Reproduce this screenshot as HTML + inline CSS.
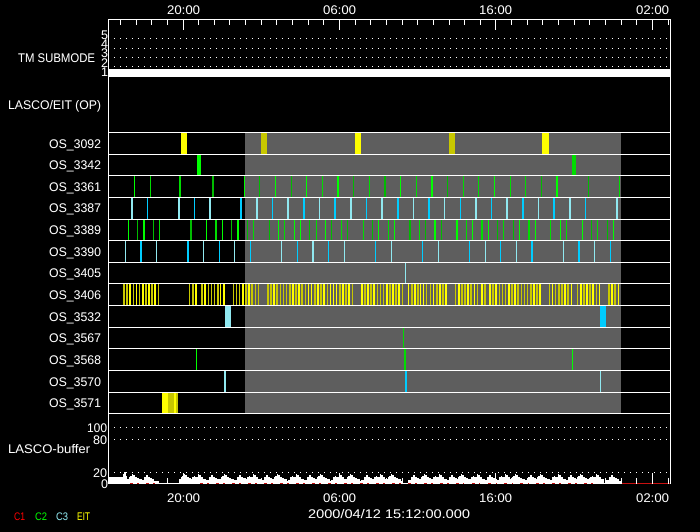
<!DOCTYPE html>
<html><head><meta charset="utf-8"><style>
html,body{margin:0;padding:0;background:#000;width:700px;height:532px;overflow:hidden}
svg{display:block;font-family:"Liberation Sans",sans-serif;font-size:12.5px;fill:#fff}
.a rect,.c rect{width:1px}
.a rect{height:22px}.c rect{height:21px}
rect.t{width:2px}rect.w{width:3px}rect.f{width:6px}rect.v{width:4px}
.g{fill:#0f0}.m{fill:#0d0}.o{fill:#0b0}
.l{fill:#90e8f0}.n{fill:#0cf}
.y{fill:#ff0}.d{fill:#c8c800}
</style></head><body>
<svg width="700" height="532" viewBox="0 0 700 532" shape-rendering="crispEdges">
<rect width="700" height="532" fill="#000"/>
<rect x="245" y="132" width="376" height="281" fill="#5e5e5e"/>

<g class="a" transform="translate(0,132)"><rect class="f y" x="181"/><rect class="f d" x="261"/><rect class="f y" x="355"/><rect class="f d" x="449"/><rect class="f y" x="542" style="width:7px"/></g>

<g class="c" transform="translate(0,154)"><rect class="v g" x="197"/><rect class="v m" x="572"/></g>

<g class="a" transform="translate(0,175)"><rect class="g" x="134"/><rect class="m" x="150"/><rect class="t m" x="179"/><rect class="t o" x="212"/><rect class="g" x="244"/><rect class="o" x="259"/><rect class="g" x="275"/><rect class="o" x="291"/><rect class="g" x="306"/><rect class="m" x="322"/><rect class="t g" x="337"/><rect class="o" x="353"/><rect class="m" x="369"/><rect class="t o" x="384"/><rect class="g" x="400"/><rect class="m" x="416"/><rect class="t g" x="431"/><rect class="o" x="447"/><rect class="m" x="463"/><rect class="m" x="478"/><rect class="g" x="494"/><rect class="m" x="510"/><rect class="m" x="525"/><rect class="o" x="541"/><rect class="t g" x="556"/><rect class="o" x="588"/><rect class="m" x="619"/></g>

<g class="a" transform="translate(0,197)"><rect class="t l" x="131"/><rect class="n" x="147"/><rect class="t l" x="178"/><rect class="n" x="194"/><rect class="t l" x="209"/><rect class="t n" x="240"/><rect class="t l" x="256"/><rect class="n" x="272"/><rect class="t l" x="287"/><rect class="t n" x="303"/><rect class="l" x="319"/><rect class="t n" x="334"/><rect class="t l" x="350"/><rect class="n" x="366"/><rect class="t l" x="381"/><rect class="t n" x="397"/><rect class="l" x="413"/><rect class="t n" x="428"/><rect class="l" x="444"/><rect class="n" x="460"/><rect class="t l" x="475"/><rect class="n" x="491"/><rect class="t l" x="506"/><rect class="t n" x="522"/><rect class="l" x="538"/><rect class="t n" x="553"/><rect class="t l" x="569"/><rect class="n" x="585"/><rect class="t l" x="616"/></g>

<g class="c" transform="translate(0,219)"><rect class="g" x="128"/><rect class="o" x="137"/><rect class="t g" x="143"/><rect class="o" x="153"/><rect class="m" x="159"/><rect class="t o" x="190"/><rect class="g" x="206"/><rect class="t m" x="215"/><rect class="g" x="222"/><rect class="o" x="231"/><rect class="t g" x="237"/><rect class="o" x="247"/><rect class="m" x="253"/><rect class="o" x="269"/><rect class="g" x="278"/><rect class="m" x="284"/><rect class="g" x="294"/><rect class="g" x="300"/><rect class="o" x="309"/><rect class="m" x="316"/><rect class="g" x="325"/><rect class="o" x="331"/><rect class="m" x="341"/><rect class="o" x="347"/><rect class="m" x="363"/><rect class="o" x="372"/><rect class="g" x="378"/><rect class="m" x="388"/><rect class="g" x="394"/><rect class="t o" x="409"/><rect class="m" x="419"/><rect class="o" x="425"/><rect class="t g" x="434"/><rect class="o" x="441"/><rect class="t g" x="456"/><rect class="m" x="466"/><rect class="g" x="472"/><rect class="t m" x="481"/><rect class="g" x="488"/><rect class="o" x="497"/><rect class="m" x="503"/><rect class="o" x="513"/><rect class="g" x="519"/><rect class="t m" x="528"/><rect class="g" x="535"/><rect class="m" x="550"/><rect class="g" x="560"/><rect class="m" x="566"/><rect class="g" x="582"/><rect class="o" x="591"/><rect class="m" x="597"/><rect class="o" x="607"/><rect class="g" x="613"/></g>

<g class="a" transform="translate(0,240)"><rect class="l" x="125"/><rect class="t n" x="140"/><rect class="l" x="156"/><rect class="t n" x="187"/><rect class="l" x="203"/><rect class="n" x="219"/><rect class="l" x="234"/><rect class="n" x="250"/><rect class="l" x="281"/><rect class="n" x="297"/><rect class="t l" x="312"/><rect class="n" x="328"/><rect class="l" x="344"/><rect class="n" x="375"/><rect class="l" x="391"/><rect class="n" x="422"/><rect class="l" x="438"/><rect class="n" x="469"/><rect class="l" x="485"/><rect class="n" x="500"/><rect class="l" x="516"/><rect class="t n" x="531"/><rect class="l" x="563"/><rect class="t n" x="578"/><rect class="l" x="594"/><rect class="n" x="610"/></g>

<g class="c" transform="translate(0,262)"><rect class="l" x="405"/></g>

<g class="a" transform="translate(0,283)"><rect class="t d" x="123"/><rect class="t d" x="126"/><rect class="t y" x="129"/><rect class="d" x="133"/><rect class="y" x="136"/><rect class="d" x="139"/><rect class="t y" x="142"/><rect class="t d" x="145"/><rect class="t y" x="148"/><rect class="t d" x="151"/><rect class="t y" x="154"/><rect class="d" x="158"/>
<rect class="d" x="189"/><rect class="t d" x="192"/><rect class="t y" x="195"/><rect class="t d" x="201"/><rect class="t y" x="204"/><rect class="d" x="208"/><rect class="d" x="211"/><rect class="d" x="214"/><rect class="t d" x="217"/><rect class="y" x="220"/><rect class="t y" x="223"/>
<rect class="d" x="233"/><rect class="d" x="236"/><rect class="d" x="239"/><rect class="t y" x="242"/><rect class="t d" x="245"/><rect class="t y" x="248"/><rect class="t d" x="251"/><rect class="d" x="255"/><rect class="d" x="258"/>
<rect class="t d" x="267"/><rect class="t d" x="270"/><rect class="t y" x="273"/><rect class="t d" x="276"/><rect class="d" x="280"/><rect class="d" x="283"/><rect class="d" x="286"/><rect class="t d" x="289"/><rect class="t y" x="292"/><rect class="t d" x="295"/><rect class="t y" x="298"/>
<rect class="t d" x="301"/><rect class="d" x="305"/><rect class="y" x="308"/><rect class="y" x="311"/><rect class="t d" x="314"/><rect class="t y" x="317"/><rect class="t d" x="320"/><rect class="t y" x="323"/><rect class="d" x="327"/><rect class="y" x="330"/><rect class="y" x="333"/><rect class="y" x="336"/><rect class="t d" x="339"/><rect class="t y" x="342"/><rect class="t d" x="345"/><rect class="t y" x="348"/><rect class="d" x="352"/>
<rect class="t y" x="361"/><rect class="t d" x="364"/><rect class="t y" x="367"/><rect class="t d" x="370"/><rect class="t y" x="373"/><rect class="d" x="377"/><rect class="d" x="380"/><rect class="d" x="383"/><rect class="t y" x="386"/><rect class="t d" x="389"/><rect class="t y" x="392"/><rect class="t d" x="395"/><rect class="t y" x="398"/><rect class="d" x="402"/>
<rect class="y" x="408"/><rect class="t d" x="411"/><rect class="t y" x="414"/><rect class="t d" x="417"/><rect class="y" x="420"/><rect class="y" x="423"/><rect class="d" x="426"/><rect class="d" x="430"/><rect class="y" x="433"/><rect class="t d" x="436"/><rect class="t y" x="439"/><rect class="t d" x="442"/><rect class="t y" x="445"/>
<rect class="d" x="455"/><rect class="t y" x="458"/><rect class="t d" x="461"/><rect class="t d" x="464"/><rect class="t y" x="467"/><rect class="t d" x="470"/><rect class="y" x="474"/><rect class="d" x="477"/><rect class="t y" x="481"/><rect class="t d" x="484"/><rect class="t y" x="489"/><rect class="t d" x="492"/><rect class="t y" x="495"/><rect class="d" x="499"/><rect class="d" x="502"/><rect class="d" x="505"/><rect class="t y" x="508"/><rect class="t d" x="511"/><rect class="t y" x="514"/><rect class="t d" x="517"/><rect class="d" x="521"/><rect class="d" x="524"/><rect class="d" x="527"/><rect class="t d" x="530"/><rect class="t y" x="533"/><rect class="t d" x="536"/><rect class="t y" x="539"/>
<rect class="d" x="549"/><rect class="y" x="552"/><rect class="d" x="555"/><rect class="t d" x="558"/><rect class="t d" x="561"/><rect class="t y" x="564"/><rect class="t d" x="567"/><rect class="y" x="571"/>
<rect class="d" x="577"/><rect class="t y" x="580"/><rect class="t d" x="583"/><rect class="t y" x="586"/><rect class="t d" x="589"/><rect class="t y" x="592"/><rect class="d" x="596"/><rect class="y" x="599"/>
<rect class="t d" x="608"/><rect class="t y" x="611"/><rect class="t d" x="614"/><rect class="y" x="618"/></g>

<g class="a" transform="translate(0,305)"><rect class="f l" x="225"/><rect class="f n" x="600"/></g>
<g class="c" transform="translate(0,327)"><rect class="m" x="403"/></g>
<g class="a" transform="translate(0,348)"><rect class="g" x="196"/><rect class="t m" x="404"/><rect class="g" x="572"/></g>
<g class="a" transform="translate(0,370)"><rect class="t l" x="224"/><rect class="t n" x="405"/><rect class="l" x="600"/></g>
<g class="c" transform="translate(0,392)"><rect class="f y" x="162"/><rect class="f d" x="168"/><rect class="t y" x="174"/><rect class="t d" x="176"/></g>

<path fill="none" stroke="#fff" d="M108 132.500H671M108 154.500H671M108 175.500H671M108 197.500H671M108 219.500H671M108 240.500H671M108 262.500H671M108 283.500H671M108 305.500H671M108 327.500H671M108 348.500H671M108 370.500H671M108 392.500H671M108 413.500H671"/>

<rect x="109" y="69" width="562" height="8" fill="#fff"/>
<path fill="none" stroke="#fff" stroke-dasharray="1 5" d="M114 38.500H668M114 48.500H668M114 57.500H668M114 66.500H668M114 427.500H668M114 439.500H668M114 472.500H668"/>

<!-- histogram -->
<defs>
<path id="b1" d="M0 483v-4h2v-2h1v-1h2v-2h1v1h2v2h2v1h2v1h3v4z"/>
<path id="b2" d="M0 483v-3h2v-3h2v-1h1v1h3v-3h1v1h2v2h2v2h3v4z"/>
<path id="b3" d="M0 483v-3h3v-3h2v-2h2v2h2v1h2v1h2v2h2v2z"/>
<path id="t" fill="none" stroke="#fff" d="M120.500 19v6M136.500 19v6M151.500 19v6M167.500 19v6M183.500 19v11M198.500 19v6M214.500 19v6M229.500 19v6M245.500 19v6M261.500 19v6M276.500 19v6M292.500 19v6M308.500 19v6M323.500 19v6M339.500 19v11M355.500 19v6M370.500 19v6M386.500 19v6M402.500 19v6M417.500 19v6M433.500 19v6M449.500 19v6M464.500 19v6M480.500 19v6M495.500 19v11M511.500 19v6M527.500 19v6M542.500 19v6M558.500 19v6M574.500 19v6M589.500 19v6M605.500 19v6M621.500 19v6M636.500 19v6M652.500 19v11M668.500 19v6"/>
</defs>
<path d="M109 484V477H123V474H124V472H126V476H127V484z"/>
<use href="#b1" x="127"/><use href="#b3" x="141"/><use href="#b1" x="179"/><use href="#b2" x="190"/><use href="#b3" x="206"/><use href="#b1" x="219"/><use href="#b3" x="234"/><use href="#b2" x="245"/><use href="#b3" x="261"/><use href="#b1" x="272"/><use href="#b2" x="288"/><use href="#b3" x="304"/><use href="#b1" x="315"/><use href="#b2" x="331"/><use href="#b1" x="345"/><use href="#b3" x="361"/><use href="#b2" x="372"/><use href="#b1" x="386"/><use href="#b3" x="408"/><use href="#b1" x="419"/><use href="#b2" x="431"/><use href="#b3" x="446"/><use href="#b1" x="456"/><use href="#b2" x="469"/><use href="#b3" x="484"/><use href="#b2" x="497"/><use href="#b1" x="510"/><use href="#b3" x="525"/><use href="#b1" x="535"/><use href="#b2" x="550"/><use href="#b3" x="565"/><use href="#b1" x="575"/><use href="#b2" x="588"/><use href="#b3" x="606"/>
<path d="M127 481H159V484H127zM179 481H403V484H179zM408 481H604V484H408zM609 481H621V484H609z"/>
<rect x="109" y="483" width="512" height="1" fill="#fff"/>
<rect x="621" y="483" width="50" height="1" fill="#c81010"/>
<path fill="none" stroke="#c81010" stroke-dasharray="3 4 2 7" d="M130 483.500H160M200 483.500H600"/>

<path fill="none" stroke="#fff" d="M108.500 19V484M670.500 19V484M108 19.500H671"/>
<use href="#t"/>
<use href="#t" transform="translate(0,503) scale(1,-1)"/>

<g text-rendering="geometricPrecision" shape-rendering="auto">
<text x="167" y="14" textLength="33" lengthAdjust="spacingAndGlyphs">20:00</text>
<text x="323" y="14" textLength="33" lengthAdjust="spacingAndGlyphs">06:00</text>
<text x="479" y="14" textLength="33" lengthAdjust="spacingAndGlyphs">16:00</text>
<text x="636" y="14" textLength="33" lengthAdjust="spacingAndGlyphs">02:00</text>
<text x="167" y="502" textLength="33" lengthAdjust="spacingAndGlyphs">20:00</text>
<text x="323" y="502" textLength="33" lengthAdjust="spacingAndGlyphs">06:00</text>
<text x="479" y="502" textLength="33" lengthAdjust="spacingAndGlyphs">16:00</text>
<text x="636" y="502" textLength="33" lengthAdjust="spacingAndGlyphs">02:00</text>
<text x="308" y="518" textLength="162" lengthAdjust="spacingAndGlyphs">2000/04/12 15:12:00.000</text>

<text x="101" y="39">5</text><text x="101" y="48">4</text><text x="101" y="57">3</text><text x="101" y="67">2</text><text x="101" y="76">1</text>
<text x="18" y="62" textLength="77" lengthAdjust="spacingAndGlyphs">TM SUBMODE</text>
<text x="8" y="109" textLength="93" lengthAdjust="spacingAndGlyphs">LASCO/EIT (OP)</text>

<g>
<text x="49" y="148" textLength="52" lengthAdjust="spacingAndGlyphs">OS_3092</text>
<text x="49" y="169" textLength="52" lengthAdjust="spacingAndGlyphs">OS_3342</text>
<text x="49" y="191" textLength="52" lengthAdjust="spacingAndGlyphs">OS_3361</text>
<text x="49" y="212" textLength="52" lengthAdjust="spacingAndGlyphs">OS_3387</text>
<text x="49" y="234" textLength="52" lengthAdjust="spacingAndGlyphs">OS_3389</text>
<text x="49" y="256" textLength="52" lengthAdjust="spacingAndGlyphs">OS_3390</text>
<text x="49" y="277" textLength="52" lengthAdjust="spacingAndGlyphs">OS_3405</text>
<text x="49" y="299" textLength="52" lengthAdjust="spacingAndGlyphs">OS_3406</text>
<text x="49" y="321" textLength="52" lengthAdjust="spacingAndGlyphs">OS_3532</text>
<text x="49" y="342" textLength="52" lengthAdjust="spacingAndGlyphs">OS_3567</text>
<text x="49" y="364" textLength="52" lengthAdjust="spacingAndGlyphs">OS_3568</text>
<text x="49" y="386" textLength="52" lengthAdjust="spacingAndGlyphs">OS_3570</text>
<text x="49" y="407" textLength="52" lengthAdjust="spacingAndGlyphs">OS_3571</text>
</g>

<text x="87" y="432" textLength="20" lengthAdjust="spacingAndGlyphs">100</text>
<text x="93" y="444" textLength="14" lengthAdjust="spacingAndGlyphs">80</text>
<text x="93" y="477" textLength="14" lengthAdjust="spacingAndGlyphs">20</text>
<text x="101" y="488">0</text>
<text x="8" y="453" textLength="82" lengthAdjust="spacingAndGlyphs">LASCO-buffer</text>

<g font-size="11">
<text x="14" y="520" fill="#f00" textLength="11" lengthAdjust="spacingAndGlyphs">C1</text>
<text x="35" y="520" fill="#0f0" textLength="12" lengthAdjust="spacingAndGlyphs">C2</text>
<text x="56" y="520" fill="#90e8f0" textLength="12" lengthAdjust="spacingAndGlyphs">C3</text>
<text x="77" y="520" fill="#ff0" textLength="13" lengthAdjust="spacingAndGlyphs">EIT</text>
</g>
</g>
</svg>
</body></html>
